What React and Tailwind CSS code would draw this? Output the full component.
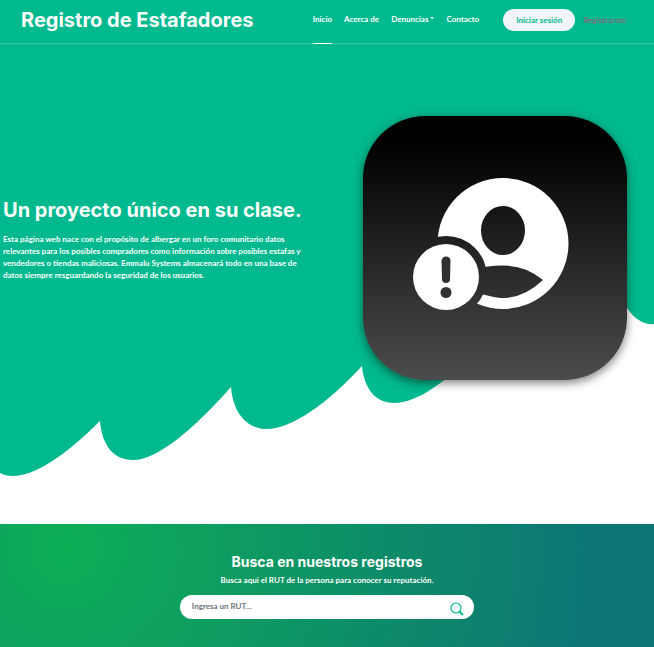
const navLink = "flex h-11 items-center border-b pb-1";

function Header() {
  return (
    <header className="flex h-11 items-center border-b border-white/20 pl-[21px] pr-7">
      <a href="#inicio" className="whitespace-nowrap pb-1 font-['Inter',sans-serif] text-xl font-bold">
        Registro de Estafadores
      </a>
      <nav className="ml-auto flex items-center gap-3 whitespace-nowrap font-bold">
        <a href="#inicio" className={navLink + " border-white"}>Inicio</a>
        <a href="#acerca" className={navLink + " border-transparent"}>Acerca de</a>
        <button type="button" className={navLink + " gap-[2px] border-transparent"}>
          Denuncias
          <span className="mb-[2px] border-x-2 border-t-2 border-x-transparent border-t-white" />
        </button>
        <a href="#contacto" className={navLink + " border-transparent"}>Contacto</a>
      </nav>
      <div className="ml-6 flex items-center gap-2 whitespace-nowrap pb-1">
        <button type="button" className="h-[22px] w-[72px] rounded-full bg-[#f1f5fa] font-bold text-[#00b98e]">
          Iniciar sesión
        </button>
        <a href="#registro" className="font-bold text-[#82707f]">Registrarme</a>
      </div>
    </header>
  );
}

function Waves() {
  return (
    <svg
      aria-hidden="true"
      viewBox="0 0 654 524"
      preserveAspectRatio="none"
      className="absolute inset-0 h-full w-full"
    >
      <path
        fill="#00b98e"
        d="M0 0H654V324C640 326 622 311 617 280C576 325 545 355 520 355C503 355 496 344 493 332C455 376 420 403 394 403C376 403 364 389 362 366C327 404 291 429 267 429C247 429 233 413 231 387C193 430 157 460 133 460C114 460 102 446 100 421C64 457 34 476 13 476Q5 476 0 473Z"
      />
    </svg>
  );
}

function AlertUserLogo() {
  return (
    <svg role="img" aria-label="Usuario reportado" viewBox="0 0 264 264" className="h-full w-full">
      <mask id="person">
        <circle cx="140" cy="127.500" r="65.500" fill="white" />
        <ellipse cx="140" cy="114.500" rx="22" ry="24.500" fill="black" />
        <path d="M106 154Q123 149.500 140 149.500Q163 149.500 180 164Q161 182 140 182Q130 182 106 174Z" fill="black" />
        <circle cx="83" cy="161" r="41" fill="black" />
      </mask>
      <rect width="264" height="264" fill="white" mask="url(#person)" />
      <circle cx="83" cy="161" r="33" fill="white" />
      <path d="M78.500 145Q79 140.500 83 140.500Q87.500 140.500 87.500 145L87 163Q87 167 83 167Q79 167 79 163Z" fill="#303030" />
      <circle cx="83" cy="176.500" r="5.500" fill="#333333" />
    </svg>
  );
}

function Hero() {
  return (
    <section className="grid grid-cols-2 pb-[144px] pt-[72px]">
      <div className="flex flex-col justify-center gap-[9px] pb-[19px] pl-[3px]">
        <h1 className="whitespace-nowrap font-['Inter',sans-serif] text-xl font-bold leading-7">Un proyecto único en su clase.</h1>
        <p className="pr-3 font-bold leading-3">
          Esta página web nace con el propósito de albergar en un foro comunitario datos
          relevantes para los posibles compradores como información sobre posibles estafas y
          vendedores o tiendas maliciosas. Emmalu Systems almacenará todo en una base de
          datos siempre resguardando la seguridad de los usuarios.
        </p>
      </div>
      <div className="flex justify-end pr-[27px]">
        <div className="h-[264px] w-[264px] rounded-[62px] bg-linear-to-b/srgb from-black from-10% to-[#4c4c4c] shadow-[0_3px_10px_rgba(0,0,0,0.5)]">
          <AlertUserLogo />
        </div>
      </div>
    </section>
  );
}

function Search() {
  return (
    <section className="flex flex-col items-center bg-[radial-gradient(circle_at_10%_20%,rgb(14,174,87)_0%,rgb(12,116,117)_90%)] pb-7 pt-7 text-white">
      <h2 className="font-['Inter',sans-serif] text-sm font-bold leading-5">Busca en nuestros registros</h2>
      <p className="mt-[2px] font-bold leading-3">
        Busca aqui el RUT de la persona para conocer su reputación.
      </p>
      <form className="mt-[9px] flex h-6 w-[45%] items-center rounded-full bg-white pl-3 pr-[10px]">
        <input
          type="text"
          aria-label="RUT"
          placeholder="Ingresa un RUT..."
          className="min-w-0 flex-1 pb-[2px] font-bold text-gray-700 outline-none placeholder:text-[#6c757d]"
        />
        <button type="button" aria-label="Buscar" className="mt-1">
          <svg viewBox="0 0 14 14" className="h-[14px] w-[14px]" fill="none" stroke="#00b98e">
            <circle cx="6" cy="6" r="5" strokeWidth="1.200" />
            <path d="M9.500 9.500L13 13" strokeWidth="2" />
          </svg>
        </button>
      </form>
    </section>
  );
}

export default function App() {
  return (
    <div className="min-h-screen bg-white font-['Lato',sans-serif] text-[8px]">
      <div className="relative text-white">
        <Waves />
        <div className="relative">
          <Header />
          <Hero />
        </div>
      </div>
      <main>
        <Search />
      </main>
    </div>
  );
}
